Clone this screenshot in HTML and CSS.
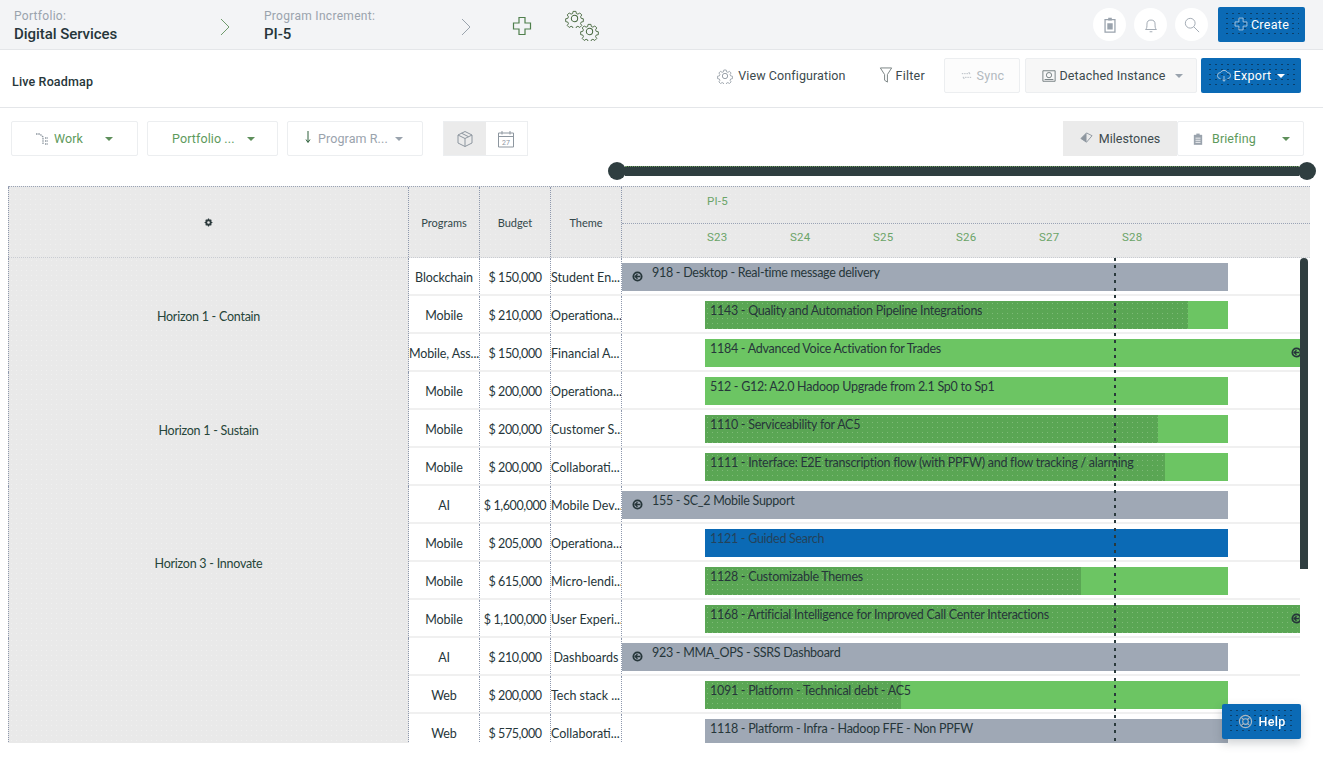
FILE: index.html
```html
<!DOCTYPE html>
<html lang="en">
<head>
<meta charset="utf-8">
<title>Live Roadmap</title>
<link rel="stylesheet" href="styles.css">
</head>
<body>
<svg class="defs" width="0" height="0" aria-hidden="true">
  <symbol id="gear" viewBox="0 0 24 24"><path d="M10 2h4l.6 3 2.2.9 2.6-1.700 2.800 2.800-1.700 2.600.9 2.200 3 .6v4l-3 .6-.9 2.200 1.700 2.600-2.800 2.800-2.600-1.700-2.200.9-.6 3h-4l-.6-3-2.200-.9-2.600 1.700-2.800-2.800 1.700-2.600-.9-2.200-3-.6v-4l3-.6.9-2.200-1.700-2.600 2.800-2.800 2.600 1.700 2.200-.9z" transform="translate(1.200 1.200) scale(.9)" fill="none" stroke="currentColor" stroke-width="1.300"/><circle cx="12" cy="12" r="4" fill="none" stroke="currentColor" stroke-width="1.300"/></symbol>
  <symbol id="plus" viewBox="0 0 20 20"><path d="M7 1.500h6v5.500h5.500v6H13v5.500H7V13H1.500V7H7z" fill="none" stroke="currentColor" stroke-width="1.200"/></symbol>
  <symbol id="chev" viewBox="0 0 10 18"><path d="M1 1l8 8-8 8" fill="none" stroke="currentColor" stroke-width="1"/></symbol>
  <symbol id="expand" viewBox="0 0 12 12"><circle cx="6" cy="6" r="4.500" fill="none" stroke="currentColor" stroke-width="2"/><path d="M3 6h6M6 3.500L3.500 6 6 8.500" fill="none" stroke="currentColor" stroke-width="1.500"/></symbol>
</svg>

<header class="topbar">
  <div class="crumb crumb-portfolio"><span class="crumb-label">Portfolio:</span><span class="crumb-value">Digital Services</span></div>
  <svg class="chev"><use href="#chev"/></svg>
  <div class="crumb crumb-pi"><span class="crumb-label">Program Increment:</span><span class="crumb-value">PI-5</span></div>
  <svg class="chev"><use href="#chev"/></svg>
  <svg class="top-plus"><use href="#plus"/></svg>
  <div class="gears">
    <svg class="gear-a"><use href="#gear"/></svg>
    <svg class="gear-b"><use href="#gear"/></svg>
  </div>
  <div class="top-actions">
    <span class="round"><svg class="round-icon" viewBox="0 0 16 20"><path d="M2.500 4h11v14h-11z" fill="none" stroke="currentColor" stroke-width="1.400"/><path d="M6 2h4v3H6zM5 8h6v7H5z" fill="currentColor"/></svg></span>
    <span class="round"><svg class="round-icon" viewBox="0 0 16 20"><path d="M2 15c1.500-1.500 1.500-3 1.500-6a4.500 4.500 0 0 1 9 0c0 3 0 4.500 1.500 6zM6.500 17.500h3" fill="none" stroke="currentColor"/></svg></span>
    <span class="round"><svg class="round-icon" viewBox="0 0 18 18"><circle cx="7" cy="7" r="5.500" fill="none" stroke="currentColor"/><path d="M11 11l6 6" stroke="currentColor"/></svg></span>
    <button class="btn-blue btn-create"><svg class="btn-ico"><use href="#plus"/></svg>Create</button>
  </div>
</header>

<section class="subbar">
  <h1 class="page-title">Live Roadmap</h1>
  <div class="sub-actions">
    <span class="link link-config"><svg class="gear-s"><use href="#gear"/></svg>View Configuration</span>
    <span class="link link-filter"><svg class="filter-ico" viewBox="0 0 14 18"><path d="M1 1h12L8.500 8v8l-3-2V8z" fill="none" stroke="currentColor"/></svg>Filter</span>
    <button class="btn-light btn-sync"><svg class="sync-ico" viewBox="0 0 14 14"><path d="M2 5h9l-2-2M12 9H3l2 2" fill="none" stroke="currentColor" stroke-dasharray="1.500 1"/></svg>Sync</button>
    <button class="btn-light btn-detached"><svg class="det-ico" viewBox="0 0 16 16"><path d="M1 2h14v12H1z" fill="none" stroke="currentColor"/><circle cx="8" cy="7" r="3" fill="none" stroke="currentColor"/><path d="M3 12h10" stroke="currentColor"/></svg>Detached Instance<i class="caret caret-gray"></i></button>
    <button class="btn-blue btn-export"><svg class="btn-ico" viewBox="0 0 16 16"><path d="M4 11a3.500 3.500 0 0 1 0-7 4.500 4.500 0 0 1 8 0 3.500 3.500 0 0 1 0 7M8 8v6M6 12l2 2 2-2" fill="none" stroke="currentColor"/></svg>Export<i class="caret caret-white"></i></button>
  </div>
</section>

<section class="toolbar">
  <button class="drop drop-work"><svg class="work-ico" viewBox="0 0 14 14"><path d="M1 2h4l3 3v7M10 6h3M10 9h3M10 12h3" fill="none" stroke="currentColor" stroke-width="1.300" stroke-dasharray="1.500 .8"/></svg><span class="drop-text">Work</span><i class="caret caret-green"></i></button>
  <button class="drop drop-portfolio"><span class="drop-text">Portfolio ...</span><i class="caret caret-green"></i></button>
  <button class="drop drop-program"><svg class="arrow-ico" viewBox="0 0 6 14"><path d="M3 1v11M1 9.500L3 12.500l2-3" fill="none" stroke="currentColor"/></svg><span class="drop-text drop-muted">Program R...</span><i class="caret caret-gray"></i></button>
  <div class="toggle">
    <span class="toggle-item toggle-on"><svg class="toggle-ico" viewBox="0 0 18 18"><path d="M9 1.500l7 3.500v8l-7 3.500L2 13V5zM2 5l7 3.500L16 5M9 8.500v8M5.500 3.200l7 3.500" fill="none" stroke="currentColor"/></svg></span>
    <span class="toggle-item"><svg class="toggle-ico" viewBox="0 0 18 18"><path d="M1.500 3h15v14h-15zM1.500 6.500h15M5 1v3.500M13 1v3.500" fill="none" stroke="currentColor"/><text x="9" y="14.500" class="cal-num">27</text></svg></span>
  </div>
  <div class="toolbar-right">
    <span class="milestones"><svg class="flag-ico" viewBox="0 0 14 14"><path d="M1 7l6-6 6 3-6 7z" fill="none" stroke="currentColor"/><path d="M1 7l6 4V1z" fill="currentColor"/></svg>Milestones</span>
    <button class="drop drop-briefing"><svg class="brief-ico" viewBox="0 0 12 14"><path d="M1 2h10v12H1z" fill="currentColor"/><path d="M4 .5h4v3H4z" fill="currentColor"/><path d="M3 6h6M3 8.500h6M3 11h6" stroke="#fff"/></svg><span class="drop-text">Briefing</span><i class="caret caret-green"></i></button>
  </div>
</section>

<div class="slider"><span class="knob"></span><span class="track"></span><span class="knob"></span></div>

<main class="board">
  <div class="thead">
    <div class="th th-settings"><svg class="th-gear" viewBox="0 0 12 12"><circle cx="6" cy="6" r="3" fill="none" stroke="currentColor" stroke-width="2.400"/><path d="M6 .8v2M6 9.200v2M.8 6h2M9.200 6h2M2.300 2.300l1.400 1.400M8.300 8.300l1.400 1.400M2.300 9.700l1.400-1.400M8.300 3.700l1.400-1.400" stroke="currentColor" stroke-width="1.600"/></svg></div>
    <div class="th">Programs</div>
    <div class="th">Budget</div>
    <div class="th">Theme</div>
    <div class="th-time">
      <div class="time-pi">PI-5</div>
      <div class="time-sprints"><span>S23</span><span>S24</span><span>S25</span><span>S26</span><span>S27</span><span>S28</span></div>
    </div>
  </div>

  <div class="tbody">
    <div class="group group-3">Horizon 1 - Contain</div>
    <div class="td">Blockchain</div><div class="td td-money">$ 150,000</div><div class="td td-theme">Student En...</div>
    <div class="lane"><div class="bar bar-gray bar-root"><svg class="bar-exp"><use href="#expand"/></svg>918 - Desktop - Real-time message delivery</div></div>
    <div class="td">Mobile</div><div class="td td-money">$ 210,000</div><div class="td td-theme">Operationa...</div>
    <div class="lane"><div class="bar bar-green bar-child"><span class="bar-fill" style="width:483px"></span><span class="bar-text">1143 - Quality and Automation Pipeline Integrations</span></div></div>
    <div class="td td-tight">Mobile, Ass...</div><div class="td td-money">$ 150,000</div><div class="td td-theme">Financial A...</div>
    <div class="lane"><div class="bar bar-green bar-child bar-over"><span class="bar-text">1184 - Advanced Voice Activation for Trades</span><svg class="bar-end"><use href="#expand"/></svg></div></div>

    <div class="group group-3">Horizon 1 - Sustain</div>
    <div class="td">Mobile</div><div class="td td-money">$ 200,000</div><div class="td td-theme">Operationa...</div>
    <div class="lane"><div class="bar bar-green bar-child"><span class="bar-text">512 - G12: A2.0 Hadoop Upgrade from 2.1 Sp0 to Sp1</span></div></div>
    <div class="td">Mobile</div><div class="td td-money">$ 200,000</div><div class="td td-theme">Customer S...</div>
    <div class="lane"><div class="bar bar-green bar-child"><span class="bar-fill" style="width:453px"></span><span class="bar-text">1110 - Serviceability for AC5</span></div></div>
    <div class="td">Mobile</div><div class="td td-money">$ 200,000</div><div class="td td-theme">Collaborati...</div>
    <div class="lane"><div class="bar bar-green bar-child"><span class="bar-fill" style="width:460px"></span><span class="bar-text">1111 - Interface: E2E transcription flow (with PPFW) and flow tracking / alarming</span></div></div>

    <div class="group group-4">Horizon 3 - Innovate</div>
    <div class="td">AI</div><div class="td td-money">$ 1,600,000</div><div class="td td-theme">Mobile Dev...</div>
    <div class="lane"><div class="bar bar-gray bar-root"><svg class="bar-exp"><use href="#expand"/></svg>155 - SC_2 Mobile Support</div></div>
    <div class="td">Mobile</div><div class="td td-money">$ 205,000</div><div class="td td-theme">Operationa...</div>
    <div class="lane"><div class="bar bar-blue bar-child"><span class="bar-text">1121 - Guided Search</span></div></div>
    <div class="td">Mobile</div><div class="td td-money">$ 615,000</div><div class="td td-theme">Micro-lendi...</div>
    <div class="lane"><div class="bar bar-green bar-child"><span class="bar-fill" style="width:376px"></span><span class="bar-text">1128 - Customizable Themes</span></div></div>
    <div class="td">Mobile</div><div class="td td-money">$ 1,100,000</div><div class="td td-theme">User Experi...</div>
    <div class="lane"><div class="bar bar-green bar-child bar-over"><span class="bar-fill" style="width:595px"></span><span class="bar-text">1168 - Artificial Intelligence for Improved Call Center Interactions</span><svg class="bar-end"><use href="#expand"/></svg></div></div>

    <div class="group group-3"></div>
    <div class="td">AI</div><div class="td td-money">$ 210,000</div><div class="td td-center">Dashboards</div>
    <div class="lane"><div class="bar bar-gray bar-root"><svg class="bar-exp"><use href="#expand"/></svg>923 - MMA_OPS - SSRS Dashboard</div></div>
    <div class="td">Web</div><div class="td td-money">$ 200,000</div><div class="td td-theme">Tech stack ...</div>
    <div class="lane"><div class="bar bar-green bar-child"><span class="bar-fill" style="width:196px"></span><span class="bar-text">1091 - Platform - Technical debt - AC5</span></div></div>
    <div class="td">Web</div><div class="td td-money">$ 575,000</div><div class="td td-theme">Collaborati...</div>
    <div class="lane"><div class="bar bar-gray bar-child"><span class="bar-text">1118 - Platform - Infra - Hadoop FFE - Non PPFW</span></div></div>
  </div>

  <span class="today"></span>
  <span class="scroll-thumb"></span>
</main>

<button class="help"><svg class="help-ico" viewBox="0 0 16 16"><circle cx="8" cy="8" r="6.500" fill="none" stroke="currentColor" stroke-width="1.200"/><circle cx="8" cy="8" r="3" fill="none" stroke="currentColor" stroke-width="1.200"/><path d="M3.500 3.500l2.500 2.500M12.500 3.500L10 6M3.500 12.500L6 10M12.500 12.500L10 10" stroke="currentColor" stroke-width="1.200"/></svg>Help</button>
</body>
</html>
```

FILE: styles.css
```css
* { box-sizing: border-box; }
html, body { height: 100%; }
body {
  margin: 0;
  background: #fff;
  color: #26363a;
  font-family: Roboto, "Liberation Sans", sans-serif;
  overflow: hidden;
}
button { font-family: inherit; cursor: pointer; }
.defs { position: absolute; }

/* top bar */
.topbar {
  height: 50px;
  display: flex;
  align-items: center;
  background: #f3f4f6;
  border-bottom: 1px solid #e4e6e9;
  padding: 0 18px 0 14px;
}
.crumb { display: flex; flex-direction: column; padding-top: 3px; }
.crumb-portfolio { width: 206px; }
.crumb-pi { width: 197px; margin-left: 34px; }
.crumb-label { font-size: 12px; line-height: 15px; color: #9aa3ad; letter-spacing: .3px; }
.crumb-value { font-size: 15px; line-height: 20px; font-weight: 500; letter-spacing: -.05px; color: #26363a; }
.chev { width: 10px; height: 18px; color: #6f9a6c; margin-top: 4px; }
.crumb-pi + .chev { color: #9aa3ad; }
.top-plus { width: 20px; height: 20px; color: #4f7f4c; margin-left: 41px; margin-top: 3px; }
.gears { width: 36px; height: 34px; margin-left: 33px; margin-top: 2px; display: flex; flex-wrap: wrap; align-content: flex-start; color: #47683f; }
.gear-a { width: 19px; height: 19px; }
.gear-b { width: 19px; height: 19px; margin-left: 15px; margin-top: -6px; }
.top-actions { margin-left: auto; display: flex; align-items: center; gap: 8px; }
.round {
  width: 33px; height: 33px; border-radius: 50%;
  background: #fff; display: flex; align-items: center; justify-content: center;
  color: #9aa3ad;
}
.round-icon { width: 16px; height: 18px; }
.btn-blue {
  border: 0; border-radius: 2px; color: #fff;
  background: radial-gradient(#0a3f6a .6px, transparent .8px) content-box 0 0 / 6px 5px, #0b6ab5;
  padding: 4px 6px;
  display: flex; align-items: center; justify-content: center;
  font-size: 12.500px; letter-spacing: .3px;
}
.btn-create { width: 87px; height: 35px; margin-left: 2px; margin-top: -1px; }
.btn-ico { width: 14px; height: 14px; margin-right: 3px; color: #b6cde0; flex: none; }

/* sub bar */
.subbar {
  height: 58px;
  display: flex;
  align-items: flex-start;
  padding: 8px 22px 0 12px;
  border-bottom: 1px solid #e4e6e9;
}
.page-title { margin: 16px 0 0; font-size: 12.500px; line-height: 16px; font-weight: 500; letter-spacing: .15px; color: #26363a; }
.sub-actions { margin-left: auto; display: flex; align-items: center; }
.link { display: flex; align-items: center; font-size: 12.500px; letter-spacing: .1px; color: #3c4a4d; }
.gear-s { width: 16px; height: 16px; margin-right: 5px; color: #8d969f; }
.link-filter { margin-left: 33px; letter-spacing: .25px; }
.filter-ico { width: 14px; height: 17px; margin-right: 3px; color: #76807f; }
.btn-light {
  height: 35px; border: 1px solid #eceef0; background: #fafafa; border-radius: 2px;
  display: flex; align-items: center; justify-content: center;
  font-size: 12.500px; letter-spacing: .15px; color: #3c4a4d;
}
.btn-sync { width: 76px; margin-left: 19px; color: #b2b9bf; background: #fcfcfc; letter-spacing: .25px; }
.sync-ico { width: 13px; height: 13px; margin-right: 4px; }
.btn-detached { width: 172px; margin-left: 5px; background: #f7f7f7; padding-right: 3px; }
.det-ico { width: 14px; height: 14px; margin-right: 3px; color: #6a7678; }
.btn-export { width: 100px; height: 35px; margin-left: 4px; }
.caret { display: inline-block; width: 0; height: 0; border: 4px solid transparent; border-bottom: 0; border-top-width: 4px; }
.caret-gray { border-top-color: #9aa3ad; margin-left: 9px; }
.caret-white { border-top-color: #fff; margin-left: 6px; }
.caret-green { border-top-color: #5e8f5b; }

/* toolbar */
.toolbar {
  height: 54px;
  display: flex;
  align-items: flex-start;
  padding: 13px 19px 0 11px;
}
.drop {
  height: 35px; background: #fff; border: 1px solid #eceef0; border-radius: 2px;
  display: flex; align-items: center; padding: 0;
  font-size: 12.500px; color: #5e9a5c; letter-spacing: .1px;
}
.drop-work { width: 127px; padding-left: 23px; }
.drop-work .caret { margin-left: 22px; }
.drop-portfolio { width: 131px; margin-left: 9px; padding-left: 24px; }
.drop-portfolio .caret { margin-left: 12px; }
.drop-program { width: 136px; margin-left: 9px; padding-left: 17px; }
.drop-program .caret { margin-left: 7px; }
.drop-muted { color: #9aa3ad; }
.work-ico { width: 14px; height: 14px; color: #8d969f; margin-right: 5px; }
.arrow-ico { width: 6px; height: 14px; margin-right: 7px; margin-top: -4px; color: #2d5f3a; }
.toggle { display: flex; margin-left: 20px; border: 1px solid #eceef0; height: 35px; width: 85px; }
.toggle-item { flex: 1; display: flex; align-items: center; justify-content: center; color: #8d969f; }
.toggle-on { background: #ebebeb; }
.toggle-ico { width: 18px; height: 18px; }
.cal-num { font-size: 7px; text-anchor: middle; fill: currentColor; font-family: Roboto, sans-serif; }
.toolbar-right { margin-left: auto; display: flex; }
.milestones {
  width: 114px; height: 35px; background: #ebebeb; display: flex; align-items: center; justify-content: center;
  font-size: 12.500px; letter-spacing: .05px; color: #3c4a4d;
}
.flag-ico { width: 13px; height: 13px; margin-right: 6px; color: #8d969f; }
.drop-briefing { width: 127px; padding-left: 15px; }
.brief-ico { width: 10px; height: 12px; color: #9aa3ad; margin-right: 9px; }
.drop-briefing .caret { margin-left: 26px; }

/* range slider */
.slider { display: flex; align-items: center; height: 18px; margin-left: 608px; width: 708px; }
.knob { width: 18px; height: 18px; border-radius: 50%; background: #2f3e40; flex: none; }
.track { flex: 1; height: 10px; background: #2f3e40; margin: 0 -1px; border-top: 1px dotted #6c9c5c; }

/* board */
.board {
  position: relative;
  margin: 6px 13px 0 8px;
  height: 557px;
  overflow: hidden;
  font-family: Lato, "Liberation Sans", sans-serif;
}
.thead {
  display: grid;
  grid-template-columns: 401px 71px 71px 71px 1fr;
  height: 72px;
  background: radial-gradient(#f0f0f0 .6px, transparent .8px) 0 0 / 5px 5px, #e9e9e9;
  border-top: 1px dotted #9aa3b5;
  border-bottom: 1px dotted #c9ccd2;
}
.th {
  display: flex; align-items: center; justify-content: center;
  font-size: 11px; color: #33484b;
  border-right: 1px dotted #8e98ad;
}
.th-settings { border-left: 1px dotted #8e98ad; }
.th-gear { width: 9px; height: 9px; color: #2d3b3d; }
.th-time { display: flex; flex-direction: column; color: #6ba468; font-size: 11.500px; letter-spacing: .2px; font-family: Roboto, sans-serif; }
.time-pi { height: 37px; padding: 7px 0 0 85px; line-height: 14px; border-bottom: 1px dotted #9aa3b5; }
.time-sprints { display: flex; padding: 6px 0 0 85px; line-height: 14px; }
.time-sprints span { width: 83px; }

.tbody {
  display: grid;
  grid-template-columns: 401px 71px 71px 71px 1fr;
  grid-auto-rows: 38px;
}
.group {
  display: flex; align-items: center; justify-content: center;
  padding-top: 2px;
  font-size: 12.500px; letter-spacing: -.25px; color: #26453a;
  background: radial-gradient(#f0f0f0 .6px, transparent .8px) 0 0 / 5px 5px, #e9e9e9;
  border-left: 1px dotted #8e98ad;
  border-right: 1px dotted #8e98ad;
}
.group-3 { grid-row: span 3; }
.group-4 { grid-row: span 4; }
.td {
  display: flex; align-items: center; justify-content: center;
  padding-top: 2px;
  font-size: 12.500px; letter-spacing: -.12px; color: #26363a;
  white-space: nowrap; overflow: hidden;
  border-right: 1px dotted #8e98ad;
  border-bottom: 2px solid #f0f0f0;
}
.td-money { letter-spacing: -.4px; }
.td-theme { justify-content: flex-start; letter-spacing: 0; }
.td-center { letter-spacing: 0; }
.lane {
  margin-right: 10px;
  padding-top: 5px;
  border-bottom: 2px solid #f0f0f0;
}
.bar {
  position: relative;
  height: 28px;
  display: flex;
  align-items: flex-start;
  font-size: 12.500px;
  letter-spacing: -.27px;
  line-height: 20px;
  color: #26363a;
  white-space: nowrap;
  overflow: hidden;
}
.bar-root { width: 606px; padding-left: 10px; }
.bar-child { width: 523px; margin-left: 83px; padding-left: 5px; }
.bar-over { width: 595px; }
.bar-gray { background: #9fa8b5; }
.bar-green { background: #6cc563; }
.bar-blue { background: #0b6ab5; color: #24425a; }
.bar-fill {
  position: absolute; left: 0; top: 0; bottom: 0;
  background: radial-gradient(#7fbb78 .6px, transparent .8px) 0 0 / 5px 5px, #5aa654;
}
.bar-text { position: relative; }
.bar-exp { width: 11px; height: 11px; margin: 8px 9px 0 0; color: #26363a; flex: none; }
.bar-end { position: absolute; right: -2px; top: 8px; width: 11px; height: 11px; color: #26363a; }

.today {
  position: absolute; left: 1106px; top: 72px; bottom: 0; width: 2px;
  background: repeating-linear-gradient(#2a3a3c 0 3px, transparent 3px 7.500px);
}
.scroll-thumb {
  position: absolute; left: 1292px; top: 72px; width: 8px; height: 311px;
  background: #2f3e40; border-radius: 4px 4px 0 0;
}

.help {
  position: fixed; left: 1222px; top: 704px; width: 79px; height: 35px;
  border: 0; border-radius: 2px; color: #fff;
  background: radial-gradient(#0a3f6a .6px, transparent .8px) content-box 0 0 / 6px 5px, #0b6ab5;
  padding: 4px 6px;
  display: flex; align-items: center; justify-content: center;
  font-size: 12.500px; font-weight: 500; letter-spacing: .3px;
  box-shadow: 0 4px 10px rgba(60, 70, 80, .25);
}
.help-ico { width: 15px; height: 15px; margin-right: 6px; color: #aab8c4; flex: none; }
```
